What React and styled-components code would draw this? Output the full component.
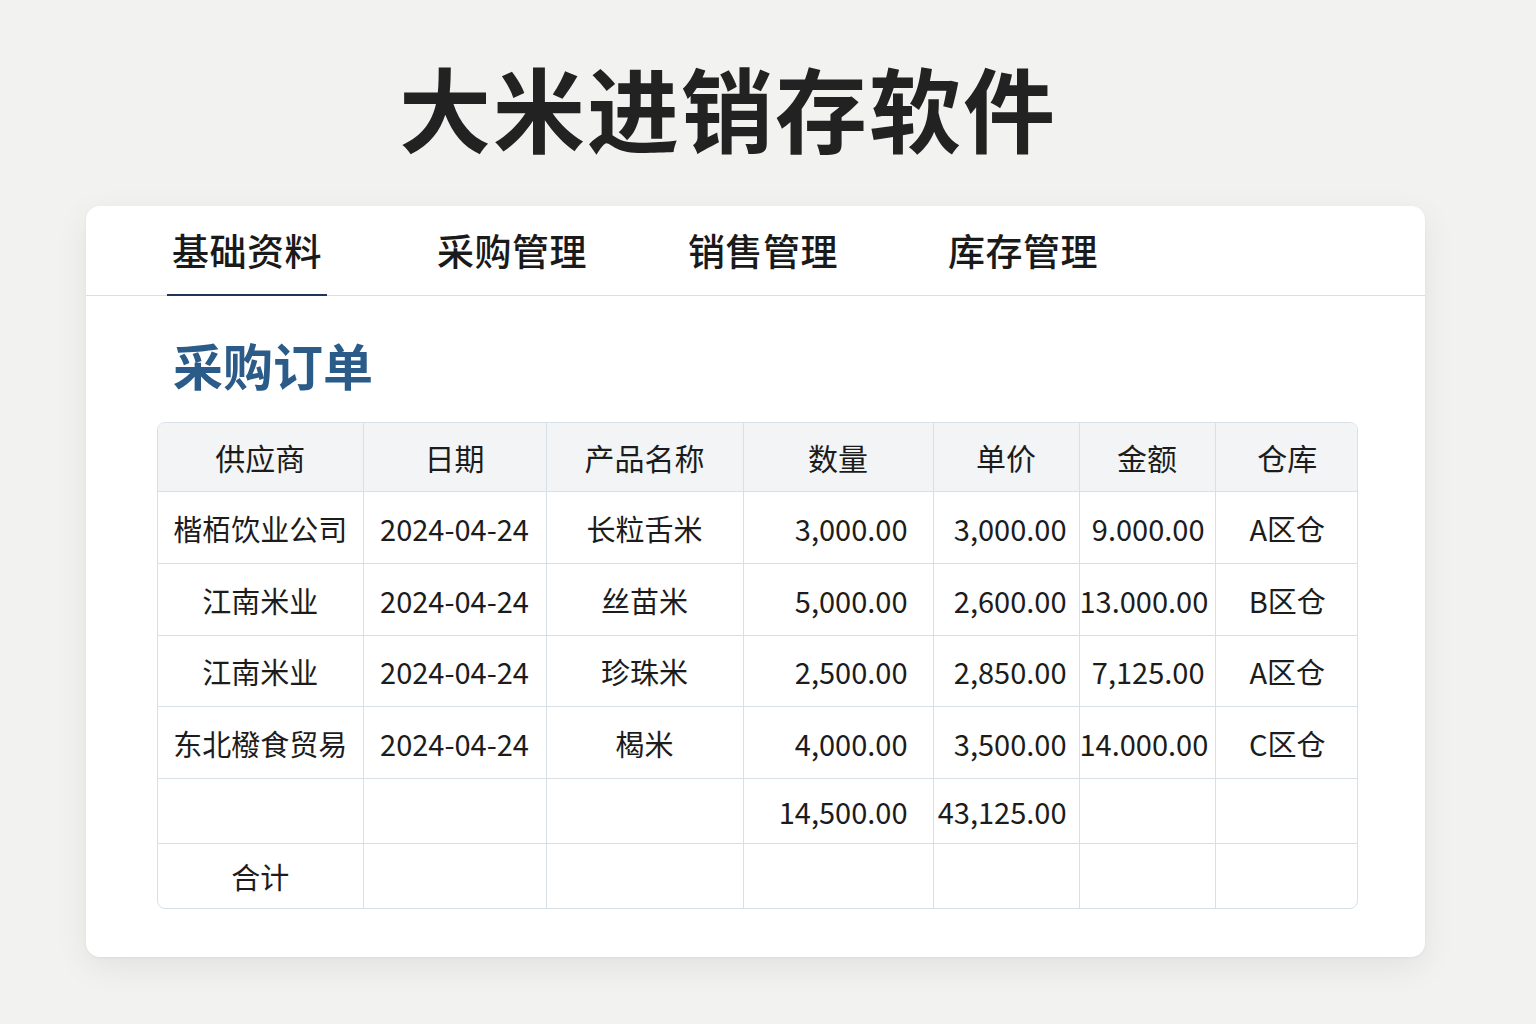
import styled, { createGlobalStyle } from 'styled-components';

const GlobalStyle = createGlobalStyle`
  html, body {
    margin: 0;
    padding: 0;
    background: #f2f2f1;
  }
  body {
    font-family: "Noto Sans CJK SC", "Noto Sans", sans-serif;
    color: #1c1c1c;
  }
`

const Page = styled.div`
  width: 1536px;
  height: 1024px;
  padding-top: 57px;
  box-sizing: border-box;
`

const Title = styled.h1`
  margin: 0 0 51px 0;
  padding-left: 399px;
  font-size: 92px;
  line-height: 98px;
  font-weight: 700;
  letter-spacing: 2px;
  color: #222;
`

const Card = styled.section`
  margin-left: 86px;
  width: 1339px;
  background: #ffffff;
  border-radius: 14px;
  box-shadow: 0 10px 34px rgba(0, 0, 0, 0.07), 0 1px 3px rgba(0, 0, 0, 0.05);
  padding-bottom: 48px;
`

const TabBar = styled.nav`
  display: flex;
  height: 90px;
  padding-left: 81px;
  border-bottom: 1px solid #dedede;
  box-sizing: border-box;
`

const Tab = styled.div`
  display: flex;
  align-items: center;
  padding: 0 5px;
  margin-right: ${p => p.$gap}px;
  font-size: 37px;
  font-weight: 500;
  letter-spacing: 0.5px;
  color: #1a1a1a;
  border-bottom: 2px solid ${p => (p.$active ? '#1f3560' : 'transparent')};
  margin-bottom: -1px;
`

const Body = styled.div`
  padding: 40px 67px 0 71px;
`

const Heading = styled.h2`
  margin: 0 0 30px 16px;
  font-size: 50px;
  line-height: 56px;
  font-weight: 700;
  color: #2b5b88;
`

const TableWrap = styled.div`
  border: 1px solid #d9e0e5;
  border-radius: 8px;
  overflow: hidden;
`

const Table = styled.table`
  width: 100%;
  border-collapse: collapse;
  table-layout: fixed;
`

const Th = styled.th`
  height: 68px;
  padding: 0;
  background: #f2f4f6;
  font-size: 30px;
  font-weight: 400;
  color: #1c1c1c;
  text-align: center;
  border-right: 1px solid #d9e0e5;
  border-bottom: 1px solid #d9e0e5;
  &:last-child { border-right: none; }
`

const Td = styled.td`
  height: ${p => p.$h}px;
  font-size: 29px;
  color: #1c1c1c;
  white-space: nowrap;
  text-align: ${p => p.$align || 'center'};
  padding: 0 ${p => p.$pr || 0}px 0 0;
  border-right: 1px solid #d9e0e5;
  border-bottom: 1px solid #d9e0e5;
  &:last-child { border-right: none; }
  tr:last-child > & { border-bottom: none; }
`

const columns = [
  { title: '供应商', width: 205 },
  { title: '日期', width: 183 },
  { title: '产品名称', width: 197 },
  { title: '数量', width: 190, align: 'right', pr: 25 },
  { title: '单价', width: 146, align: 'right', pr: 12 },
  { title: '金额', width: 136, align: 'right', pr: 10 },
  { title: '仓库', width: 144 },
]

const rows = [
  { h: 71, cells: ['楷栢饮业公司', '2024-04-24', '长粒舌米', '3,000.00', '3,000.00', '9.000.00', 'A区仓'] },
  { h: 71, cells: ['江南米业', '2024-04-24', '丝苗米', '5,000.00', '2,600.00', '13.000.00', 'B区仓'] },
  { h: 70, cells: ['江南米业', '2024-04-24', '珍珠米', '2,500.00', '2,850.00', '7,125.00', 'A区仓'] },
  { h: 71, cells: ['东北橃食贸易', '2024-04-24', '楬米', '4,000.00', '3,500.00', '14.000.00', 'C区仓'] },
  { h: 64, cells: ['', '', '', '14,500.00', '43,125.00', '', ''] },
  { h: 64, cells: ['合计', '', '', '', '', '', ''] },
]

const tabs = [
  { label: '基础资料', gap: 105, active: true },
  { label: '采购管理', gap: 91 },
  { label: '销售管理', gap: 100 },
  { label: '库存管理', gap: 0 },
]

export default function App() {
  return (
    <Page>
      <GlobalStyle />
      <Title>大米进销存软件</Title>
      <Card>
        <TabBar>
          {tabs.map(t => (
            <Tab key={t.label} $active={t.active} $gap={t.gap}>{t.label}</Tab>
          ))}
        </TabBar>
        <Body>
          <Heading>采购订单</Heading>
          <TableWrap>
            <Table>
              <colgroup>
                {columns.map(c => <col key={c.title} style={{ width: c.width }} />)}
              </colgroup>
              <thead>
                <tr>
                  {columns.map(c => <Th key={c.title}>{c.title}</Th>)}
                </tr>
              </thead>
              <tbody>
                {rows.map((r, i) => (
                  <tr key={i}>
                    {r.cells.map((v, j) => (
                      <Td key={j} $h={r.h} $align={columns[j].align} $pr={columns[j].pr}>{v}</Td>
                    ))}
                  </tr>
                ))}
              </tbody>
            </Table>
          </TableWrap>
        </Body>
      </Card>
    </Page>
  )
}
